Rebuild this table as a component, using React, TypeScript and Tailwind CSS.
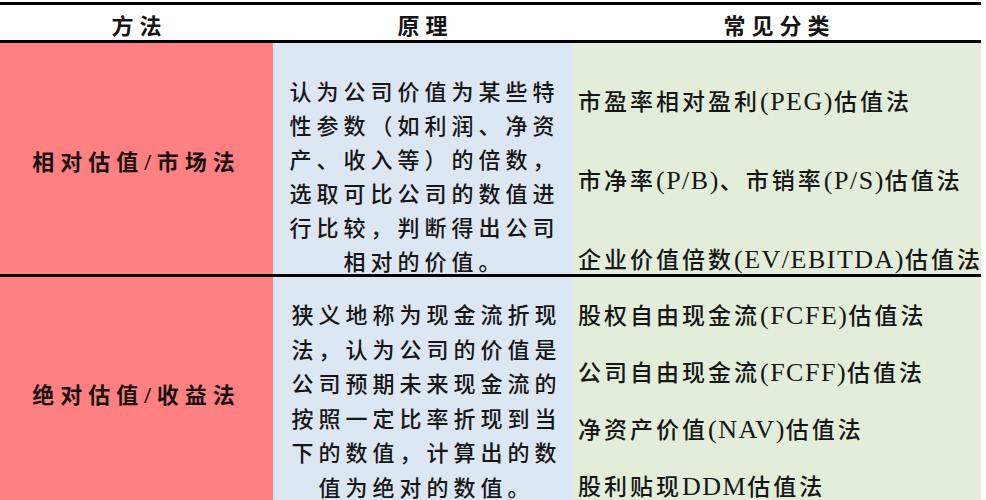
import React from "react";

function Mixed({ text }: { text: string }) {
  const parts = text.split(/([\x20-\x7e]+)/).filter((p) => p.length > 0);
  return (
    <>
      {parts.map((p, i) =>
        /^[\x20-\x7e]+$/.test(p) ? (
          <span key={i} className="font-['Liberation_Serif',serif] text-[26px] leading-none tracking-[1.5px]">
            {p}
          </span>
        ) : (
          <span key={i} className="text-[23px] font-medium leading-none tracking-[3px]">
            {p}
          </span>
        )
      )}
    </>
  );
}

function Para({ lines }: { lines: string[] }) {
  return (
    <div className="text-center text-[22px] font-medium leading-[34px] tracking-[5px] text-[#161616]">
      {lines.map((l, i) => (
        <div key={i} className="whitespace-nowrap">
          {l}
        </div>
      ))}
    </div>
  );
}

function List({ items, gap }: { items: string[]; gap: string }) {
  return (
    <div className={`flex flex-col ${gap} text-[#161616]`}>
      {items.map((t, i) => (
        <div key={i} className="h-[34px] whitespace-nowrap leading-[34px]">
          <Mixed text={t} />
        </div>
      ))}
    </div>
  );
}

export default function App() {
  return (
    <div className="w-[986px] h-[500px] overflow-hidden bg-white font-['Noto_Sans_CJK_SC',sans-serif]">
      <div className="w-[981px] mt-[2px] border-t-[3px] border-black">
        {/* header */}
        <div className="grid grid-cols-[273px_299px_409px] grid-rows-[minmax(0,1fr)] h-[38px] border-b-[3px] border-black bg-white text-[22px] leading-none font-bold tracking-[6px] text-[#141414]">
          <div className="flex items-center justify-center pt-[2px] pl-[6px]">方法</div>
          <div className="flex items-center justify-center pt-[2px] pl-[6px]">原理</div>
          <div className="flex items-center justify-center pt-[2px] pl-[6px]">常见分类</div>
        </div>
        {/* row 1 */}
        <div className="grid grid-cols-[273px_299px_409px] grid-rows-[minmax(0,1fr)] h-[234px] border-b-[3px] border-black">
          <div className="bg-[#fe8080] flex items-center justify-center pt-[6px] text-[22px] leading-none font-bold tracking-[6px] text-[#1a1010]">
            <span>
              相对估值<span className="font-['Liberation_Serif',serif] text-[24px]">/</span>市场法
            </span>
          </div>
          <div className="bg-[#dde7f3] pt-[30px] pl-[4px]">
            <Para
              lines={[
                "认为公司价值为某些特",
                "性参数（如利润、净资",
                "产、收入等）的倍数，",
                "选取可比公司的数值进",
                "行比较，判断得出公司",
                "相对的价值。",
              ]}
            />
          </div>
          <div className="bg-[#e2eeda] pt-[43px] pl-[6px]">
            <List
              gap="gap-[45px]"
              items={["市盈率相对盈利(PEG)估值法", "市净率(P/B)、市销率(P/S)估值法", "企业价值倍数(EV/EBITDA)估值法"]}
            />
          </div>
        </div>
        {/* row 2 */}
        <div className="grid grid-cols-[273px_299px_409px] grid-rows-[minmax(0,1fr)] h-[232px]">
          <div className="bg-[#fe8080] flex items-center justify-center pt-[2px] text-[22px] leading-none font-bold tracking-[6px] text-[#1a1010]">
            <span>
              绝对估值<span className="font-['Liberation_Serif',serif] text-[24px]">/</span>收益法
            </span>
          </div>
          <div className="bg-[#dde7f3] pt-[19px] pl-[8px]">
            <div className="text-center text-[22px] font-medium leading-[34.5px] tracking-[5px] text-[#161616]">
              {[
                "狭义地称为现金流折现",
                "法，认为公司的价值是",
                "公司预期未来现金流的",
                "按照一定比率折现到当",
                "下的数值，计算出的数",
                "值为绝对的数值。",
              ].map((l, i) => (
                <div key={i} className="whitespace-nowrap">
                  {l}
                </div>
              ))}
            </div>
          </div>
          <div className="bg-[#e2eeda] pt-[23px] pl-[6px]">
            <List
              gap="gap-[23px]"
              items={["股权自由现金流(FCFE)估值法", "公司自由现金流(FCFF)估值法", "净资产价值(NAV)估值法", "股利贴现DDM估值法"]}
            />
          </div>
        </div>
      </div>
    </div>
  );
}
